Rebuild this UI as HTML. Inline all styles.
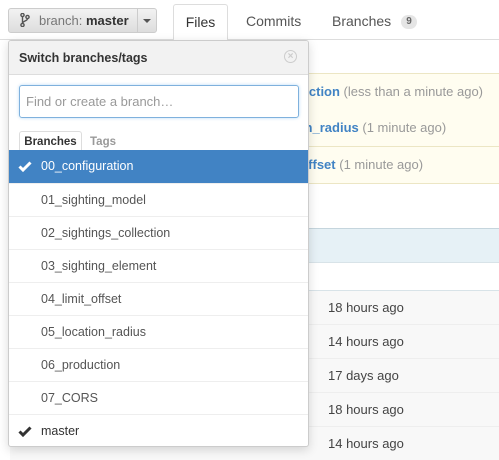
<!DOCTYPE html><html><head><style>
body{margin:0;width:499px;height:457px;overflow:hidden;background:#fff;font-family:"Liberation Sans",sans-serif;position:relative;font-size:13px;color:#333}
.a{position:absolute}
.yr{position:absolute;left:300px;width:199px;height:36px;background:#fffdf0;border-bottom:1px solid #ece6c4;line-height:36px;color:#999;font-size:13px;white-space:nowrap;overflow:hidden}
.yr i{font-style:normal;position:absolute;left:-7px}
.yr b{color:#4183c4}
.gr{position:absolute;left:10px;width:489px;height:33px;background:#f8f8f8;border-top:1px solid #eee;line-height:33px}
.gr span{position:absolute;left:318px;color:#444}
.it{position:absolute;left:9px;width:299px;height:32px;border-top:1px solid #eee;line-height:32px;color:#555;font-size:12.5px;background:#fff}
.it span{position:absolute;left:32px}
.it svg{position:absolute;left:9px;top:10px}
</style></head><body>
<div class="a" style="left:0;top:39px;width:499px;height:1px;background:#ddd"></div>
<div class="a" style="left:8px;top:8px;width:149px;height:25px;border:1px solid #ccc;border-radius:3px;background:linear-gradient(#f2f2f2,#ddd);box-sizing:border-box"></div>
<div class="a" style="left:137px;top:9px;width:1px;height:23px;background:#ccc"></div>
<div class="a" style="left:143px;top:19px;border-left:4px solid transparent;border-right:4px solid transparent;border-top:4px solid #555"></div>
<svg class="a" style="left:20px;top:13px" width="10" height="14" viewBox="0 0 10 14"><circle cx="2.5" cy="2" r="1.6" fill="none" stroke="#555" stroke-width="1.4"/><circle cx="7.5" cy="4" r="1.6" fill="none" stroke="#555" stroke-width="1.4"/><circle cx="2.5" cy="12" r="1.6" fill="none" stroke="#555" stroke-width="1.4"/><path d="M2.5 3.6V10.4M7.5 5.6C7.5 8 2.5 8 2.5 10.4" fill="none" stroke="#555" stroke-width="1.4"/></svg>
<div class="a" style="left:39px;top:13px;font-size:13px;color:#777">branch: <b style="color:#333">master</b></div>
<div class="a" style="left:173px;top:4px;width:55px;height:36px;border:1px solid #ddd;border-bottom:none;border-radius:3px 3px 0 0;background:#fff;box-sizing:border-box;text-align:center;line-height:34px;font-size:14px">Files</div>
<div class="a" style="left:246px;top:13px;font-size:14px;color:#555">Commits</div>
<div class="a" style="left:332px;top:13px;font-size:14px;color:#555">Branches</div>
<div class="a" style="left:401px;top:15px;width:16px;height:14px;border-radius:7px;background:#e5e5e5;font-size:10px;font-weight:bold;text-align:center;line-height:14px;color:#666">9</div>
<div class="yr" style="top:73px;border-top:1px solid #ece6c4"><i><b>duction</b> (less than a minute ago)</i></div>
<div class="yr" style="top:110px"><i><b>ion_radius</b> (1 minute ago)</i></div>
<div class="yr" style="top:147px"><i><b>_offset</b> (1 minute ago)</i></div>
<div class="a" style="left:10px;top:228px;width:489px;height:33px;background:#e6f1f6;border-top:1px solid #c5d5dd;border-bottom:1px solid #d8e3e8"></div>
<div class="a" style="left:10px;top:228px;width:1px;height:229px;background:#ddd"></div>
<div class="gr" style="top:290px;border-top-color:#d8e3e8"><span>18 hours ago</span></div>
<div class="gr" style="top:324px"><span>14 hours ago</span></div>
<div class="gr" style="top:358px"><span>17 days ago</span></div>
<div class="gr" style="top:392px"><span>18 hours ago</span></div>
<div class="gr" style="top:426px"><span>14 hours ago</span></div>
<div class="a" style="left:8px;top:40px;width:301px;height:407px;border:1px solid #ccc;border-radius:3px;box-sizing:border-box;background:#fff;box-shadow:0 3px 10px rgba(0,0,0,.15);overflow:hidden">
<div class="a" style="left:0;top:0;width:299px;height:33px;background:#f2f2f2;border-bottom:1px solid #ddd"></div>
<div class="a" style="left:10px;top:10px;font-weight:bold;font-size:12.5px;color:#333">Switch branches/tags</div>
<div class="a" style="left:275px;top:9px;width:11px;height:11px;border:1.5px solid #ccc;border-radius:50%;color:#ccc;font-size:10px;line-height:11px;text-align:center;font-weight:bold">×</div>
<div class="a" style="left:10px;top:44px;width:280px;height:33px;border:1px solid #7fb1dd;border-radius:3px;box-sizing:border-box;box-shadow:0 0 3px rgba(81,167,232,.4);padding-left:6px;line-height:31px;color:#999;font-size:13px">Find or create a branch…</div>
<div class="a" style="left:10px;top:90px;width:61px;height:20px;border:1px solid #ddd;border-bottom:none;border-radius:3px 3px 0 0;background:#fff;font-weight:bold;font-size:11.5px;line-height:20px;text-align:center;color:#333">Branches</div>
<div class="a" style="left:81px;top:95px;font-weight:bold;font-size:11.5px;color:#999">Tags</div>
</div>
<div class="it" style="top:150px;background:#4183c4;color:#fff;border-top:none;height:33px"><svg width="14" height="12" viewBox="0 0 14 12"><path d="M1.5 6.5L5 10L12.5 2.5" fill="none" stroke="#fff" stroke-width="3"/></svg><span>00_configuration</span></div>
<div class="it" style="top:183px"><span>01_sighting_model</span></div>
<div class="it" style="top:216px"><span>02_sightings_collection</span></div>
<div class="it" style="top:249px"><span>03_sighting_element</span></div>
<div class="it" style="top:282px"><span>04_limit_offset</span></div>
<div class="it" style="top:315px"><span>05_location_radius</span></div>
<div class="it" style="top:348px"><span>06_production</span></div>
<div class="it" style="top:381px"><span>07_CORS</span></div>
<div class="it" style="top:414px;height:31px;border-radius:0 0 3px 3px;color:#333"><svg width="14" height="12" viewBox="0 0 14 12"><path d="M1.5 6.5L5 10L12.5 2.5" fill="none" stroke="#333" stroke-width="3"/></svg><span>master</span></div>
</body></html>
